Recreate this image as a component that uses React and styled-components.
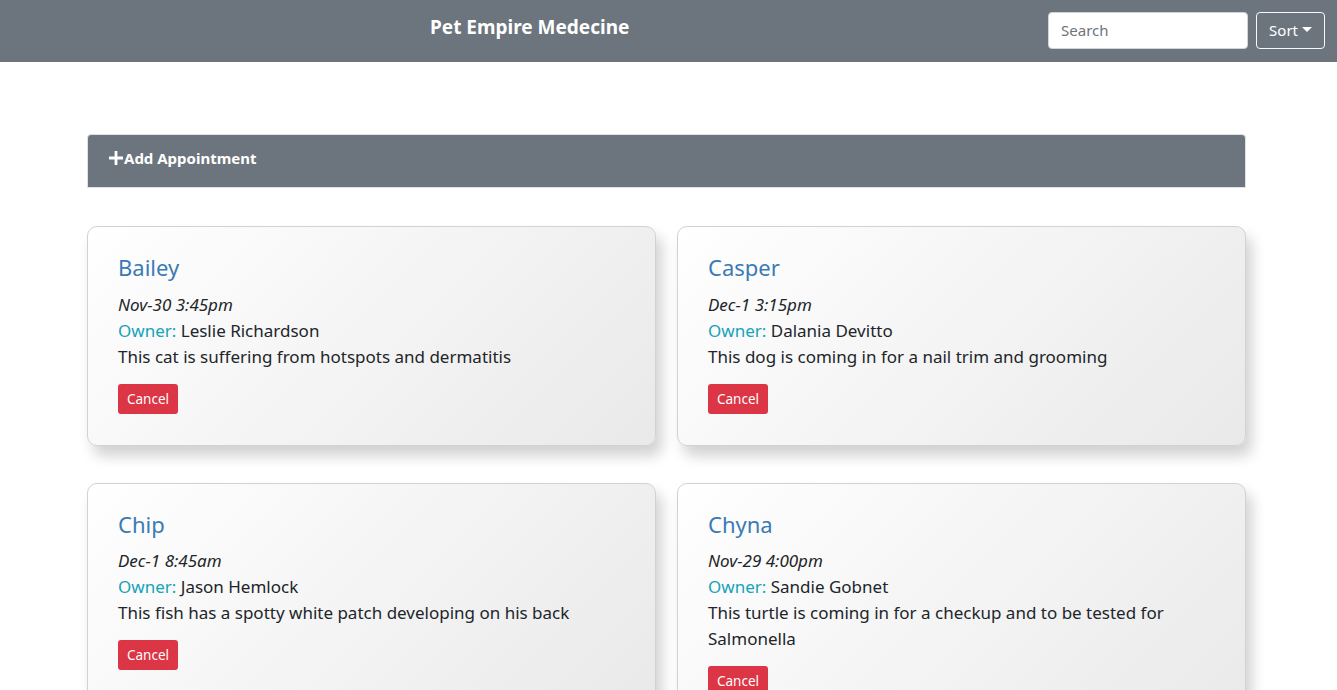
import React from 'react';
import styled, { createGlobalStyle } from 'styled-components';

const GlobalStyle = createGlobalStyle`
  body {
    margin: 0;
    background: #fff;
    font-family: "Noto Sans", "Open Sans", sans-serif;
    color: #212529;
  }
  * { box-sizing: border-box; }
`;

const NavBar = styled.nav`
  height: 62px;
  background: #6c757d;
  display: flex;
  align-items: center;
  padding: 0 12px 2px 0;
`;

const Brand = styled.div`
  flex: 1;
  padding-left: 430px;
  color: #fff;
  font-weight: 700;
  font-size: 19px;
  margin-top: -6px;
`;

const SearchInput = styled.input`
  width: 200px;
  height: 37px;
  border: 1px solid #ced4da;
  border-radius: 4px;
  padding: 6px 12px;
  font-family: inherit;
  font-size: 15px;
  color: #495057;
  &::placeholder { color: #6c757d; }
`;

const SortButton = styled.button`
  margin-left: 8px;
  height: 37px;
  padding: 0 12px;
  background: transparent;
  border: 1px solid #f8f9fa;
  border-radius: 4px;
  color: #fff;
  font-family: inherit;
  font-size: 15px;
  display: flex;
  align-items: center;
  gap: 4px;
  &::after {
    content: '';
    border-top: 5px solid #fff;
    border-left: 5px solid transparent;
    border-right: 5px solid transparent;
    margin-top: -2px;
  }
`;

const Main = styled.main`
  width: 1159px;
  margin: 72px 0 0 87px;
`;

const AddPanel = styled.section`
  background: #6c757d;
  border: 1px solid #dee2e6;
  border-radius: 4px 4px 0 0;
  height: 54px;
  padding: 13px 21px;
  color: #fff;
  font-weight: 700;
  font-size: 15px;
  display: flex;
  align-items: flex-start;
`;

const AddTitle = styled.div`
  display: flex;
  align-items: center;
  gap: 1px;
`;

const Grid = styled.div`
  margin-top: 38px;
  display: grid;
  grid-template-columns: 1fr 1fr;
  column-gap: 21px;
  row-gap: 37px;
  align-items: start;
`;

const Card = styled.article`
  border: 1px solid #d2d2d2;
  border-radius: 10px;
  background: linear-gradient(135deg, #ffffff 0%, #e9e9e9 100%);
  box-shadow: 6px 10px 14px rgba(0, 0, 0, 0.18);
  padding: 26px 30px 31px;
`;

const PetName = styled.h4`
  margin: 0 0 10px;
  font-size: 22px;
  font-weight: 400;
  line-height: 1.3;
  color: #3a7ab5;
`;

const Line = styled.div`
  font-size: 17px;
  line-height: 26px;
  font-style: ${p => (p.italic ? 'italic' : 'normal')};
`;

const OwnerLabel = styled.span`
  color: #17a2b8;
`;

const CancelButton = styled.button`
  margin-top: 14px;
  background: #dc3545;
  border: none;
  border-radius: 3px;
  color: #fff;
  font-family: inherit;
  font-size: 13.5px;
  height: 30px;
  padding: 0 9px;
  display: block;
`;

const appointments = [
  { pet: 'Bailey', date: 'Nov-30 3:45pm', owner: 'Leslie Richardson', notes: 'This cat is suffering from hotspots and dermatitis' },
  { pet: 'Casper', date: 'Dec-1 3:15pm', owner: 'Dalania Devitto', notes: 'This dog is coming in for a nail trim and grooming' },
  { pet: 'Chip', date: 'Dec-1 8:45am', owner: 'Jason Hemlock', notes: 'This fish has a spotty white patch developing on his back' },
  { pet: 'Chyna', date: 'Nov-29 4:00pm', owner: 'Sandie Gobnet', notes: 'This turtle is coming in for a checkup and to be tested for Salmonella' },
];

const PlusIcon = () => (
  <svg width="14" height="14" viewBox="0 0 14 14">
    <path d="M5.6 0h2.8v5.6H14v2.8H8.4V14H5.6V8.4H0V5.6h5.6z" fill="#fff" />
  </svg>
);

export default function App() {
  return (
    <>
      <GlobalStyle />
      <NavBar>
        <Brand>Pet Empire Medecine</Brand>
        <SearchInput placeholder="Search" />
        <SortButton>Sort</SortButton>
      </NavBar>
      <Main>
        <AddPanel>
          <AddTitle><PlusIcon />Add Appointment</AddTitle>
        </AddPanel>
        <Grid>
          {appointments.map(a => (
            <Card key={a.pet}>
              <PetName>{a.pet}</PetName>
              <Line italic>{a.date}</Line>
              <Line><OwnerLabel>Owner:</OwnerLabel> {a.owner}</Line>
              <Line>{a.notes}</Line>
              <CancelButton>Cancel</CancelButton>
            </Card>
          ))}
        </Grid>
      </Main>
    </>
  );
}
